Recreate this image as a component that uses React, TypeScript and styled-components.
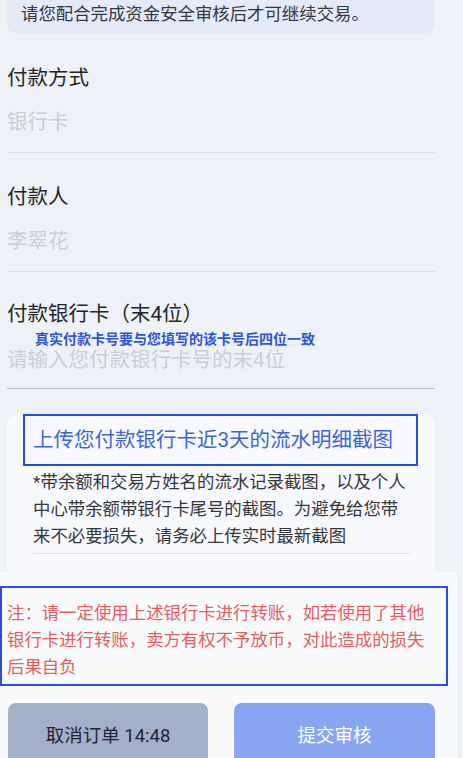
import React from 'react';
import styled, { createGlobalStyle } from 'styled-components';

const GlobalStyle = createGlobalStyle`
    html, body {
        margin: 0;
        padding: 0;
        background: #eef2f8;
        font-family: Roboto, "Noto Sans CJK SC", sans-serif;
    }
`;

const Page = styled.div`
    width: 463px;
    height: 758px;
    overflow: hidden;
    display: flex;
    flex-direction: column;
`;

const Body = styled.div`
    padding: 0 28px 0 7px;
    display: flex;
    flex-direction: column;
`;

const Notice = styled.div`
    height: 34px;
    padding: 0 14px;
    background: #e5eaf8;
    border-radius: 0 0 10px 10px;
    font-size: 17.4px;
    line-height: 28px;
    color: #33373e;
`;

const Field = styled.div<{ $top?: number; $line?: string }>`
    padding: ${(p) => p.$top ?? 30}px 0 16px;
    border-bottom: 1px solid ${(p) => p.$line ?? '#d9dde6'};
    display: flex;
    flex-direction: column;
`;

const Label = styled.div`
    font-size: 20.5px;
    line-height: 28px;
    color: #222428;
`;

const Value = styled.div<{ $compact?: boolean }>`
    margin-top: ${(p) => (p.$compact ? 0 : 16)}px;
    font-size: 20.5px;
    line-height: ${(p) => (p.$compact ? 24 : 28)}px;
    color: #c8ccd5;
`;

const Hint = styled.div`
    margin: 2px 0 0 28px;
    font-size: 14px;
    line-height: 18px;
    font-weight: 700;
    color: #2b55d9;
`;

const Card = styled.div`
    margin-top: 25px;
    padding: 0 17px 18px 16px;
    background: #f8f9fc;
    border-radius: 12px 12px 0 0;
`;

const UploadTitle = styled.div`
    height: 48px;
    padding-left: 8px;
    border: 2px solid #2450d8;
    font-size: 20.5px;
    line-height: 48px;
    color: #3b66d3;
`;

const Desc = styled.div`
    margin: 3px 0 0 10px;
    width: 378px;
    font-size: 17.4px;
    line-height: 27px;
    color: #34373c;
    padding-bottom: 3px;
    border-bottom: 1px solid #dde1e8;
`;

const Footer = styled.div`
    flex: 1;
    margin-right: 6px;
    padding-top: 14px;
    background: #f9fafc;
`;

const Note = styled.div`
    width: 448px;
    height: 100px;
    box-sizing: border-box;
    padding: 12px 0 3px 5px;
    border: 2px solid #2a4fd6;
`;

const NoteText = styled.div`
    width: 422px;
    font-size: 17.4px;
    line-height: 27px;
    color: #e35e62;
`;

const Actions = styled.div`
    margin-top: 17px;
    padding-left: 8px;
    display: grid;
    grid-template-columns: 200px 201px;
    column-gap: 26px;
`;

const ActionButton = styled.button<{ $primary?: boolean }>`
    height: 62px;
    border: none;
    border-radius: 8px;
    font-family: inherit;
    font-size: 18.5px;
    background: ${(p) => (p.$primary ? '#88a6f0' : '#a3b0c9')};
    color: ${(p) => (p.$primary ? '#ffffff' : '#1f2530')};
`;

export default function App() {
    return (
        <Page>
            <GlobalStyle />
            <Body>
                <Notice>请您配合完成资金安全审核后才可继续交易。</Notice>
                <Field>
                    <Label>付款方式</Label>
                    <Value>银行卡</Value>
                </Field>
                <Field>
                    <Label>付款人</Label>
                    <Value>李翠花</Value>
                </Field>
                <Field $top={28} $line="#bcc0d2">
                    <Label>付款银行卡（末4位）</Label>
                    <Hint>真实付款卡号要与您填写的该卡号后四位一致</Hint>
                    <Value $compact>请输入您付款银行卡号的末4位</Value>
                </Field>
                <Card>
                    <UploadTitle>上传您付款银行卡近3天的流水明细截图</UploadTitle>
                    <Desc>
                        *带余额和交易方姓名的流水记录截图，以及个人中心带余额带银行卡尾号的截图。为避免给您带来不必要损失，请务必上传实时最新截图
                    </Desc>
                </Card>
            </Body>
            <Footer>
                <Note>
                    <NoteText>
                        注：请一定使用上述银行卡进行转账，如若使用了其他银行卡进行转账，卖方有权不予放币，对此造成的损失后果自负
                    </NoteText>
                </Note>
                <Actions>
                    <ActionButton>取消订单 14:48</ActionButton>
                    <ActionButton $primary>提交审核</ActionButton>
                </Actions>
            </Footer>
        </Page>
    );
}
